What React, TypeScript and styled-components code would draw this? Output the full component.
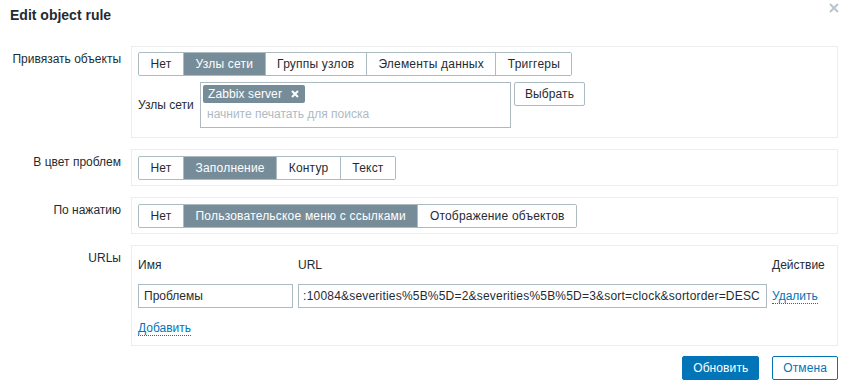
import React from 'react';
import styled, { createGlobalStyle } from 'styled-components';

const GlobalStyle = createGlobalStyle`
	* {
		box-sizing: border-box;
	}
	body {
		margin: 0;
		background: #ffffff;
		color: #1f2c33;
		font-family: 'Liberation Sans', Arial, sans-serif;
		font-size: 12px;
		line-height: 14px;
	}
`;

const Dialog = styled.div`
	width: 845px;
	padding: 0 7px 0 10px;
`;

const Header = styled.div`
	height: 46px;
	display: flex;
	justify-content: space-between;
	align-items: flex-start;
	padding-top: 7px;
`;

const Title = styled.h4`
	margin: 0;
	font-size: 14px;
	line-height: 16px;
	font-weight: bold;
	color: #1f2c33;
`;

const CloseButton = styled.button`
	margin-top: -4px;
	margin-right: -1px;
	width: 10px;
	height: 10px;
	padding: 0;
	border: 0;
	background: none;
	display: flex;
	cursor: pointer;
`;

const Form = styled.div`
	display: grid;
	grid-template-columns: 111px 1fr;
	column-gap: 10px;
	row-gap: 11px;
`;

const Label = styled.div`
	text-align: right;
	padding-top: 6px;
	white-space: nowrap;
`;

const Fieldset = styled.div<{ $pad?: string }>`
	border: 1px solid #ebeef0;
	padding: ${(p) => p.$pad || '6px 6px 5px'};
`;

const RadioList = styled.div`
	display: inline-flex;
	height: 24px;
	border: 1px solid #acbbc2;
	border-radius: 2px;
	overflow: hidden;
`;

const RadioItem = styled.div<{ $active?: boolean }>`
	padding: 0 11.5px;
	line-height: 22px;
	letter-spacing: 0.2px;
	white-space: nowrap;
	cursor: pointer;
	background: ${(p) => (p.$active ? '#768d99' : '#ffffff')};
	color: ${(p) => (p.$active ? '#ffffff' : '#1f2c33')};
	& + & {
		border-left: 1px solid #acbbc2;
	}
`;

const HostRow = styled.div`
	display: flex;
	align-items: center;
	margin-top: 6px;
`;

const SubLabel = styled.div`
	width: 62px;
	white-space: nowrap;
`;

const MultiSelect = styled.div`
	width: 311px;
	height: 46px;
	border: 1px solid #acbbc2;
	padding: 2px;
`;

const Chip = styled.span`
	display: inline-flex;
	align-items: center;
	gap: 9px;
	height: 18px;
	padding: 0 6px 0 5px;
	border-radius: 2px;
	background: #768d99;
	color: #ffffff;
	font-size: 12px;
	letter-spacing: 0.1px;
`;

const Placeholder = styled.div`
	margin-top: 4px;
	padding-left: 4px;
	color: #acbbc2;
	white-space: nowrap;
`;

const Button = styled.button<{ $primary?: boolean }>`
	height: 24px;
	padding: 0 10px;
	font-family: inherit;
	font-size: 12px;
	letter-spacing: 0.1px;
	border-radius: 2px;
	cursor: pointer;
	border: 1px solid ${(p) => (p.$primary ? '#0275b8' : '#acbbc2')};
	background: ${(p) => (p.$primary ? '#0275b8' : '#ffffff')};
	color: ${(p) => (p.$primary ? '#ffffff' : '#1f2c33')};
`;

const OutlineButton = styled(Button)`
	border-color: #0275b8;
	color: #0275b8;
`;

const SelectButton = styled(Button)`
	align-self: flex-start;
	margin-left: 3px;
`;

const UrlTable = styled.div`
	display: grid;
	grid-template-columns: 155px 469px auto;
	column-gap: 5px;
	align-items: center;
`;

const HeadCell = styled.div`
	padding-top: 6px;
	margin-bottom: 12px;
	white-space: nowrap;
`;

const TextBox = styled.div`
	height: 24px;
	border: 1px solid #acbbc2;
	padding: 0 5px;
	line-height: 22px;
	white-space: nowrap;
	overflow: hidden;
	display: flex;
`;

const ScrolledBox = styled(TextBox)`
	justify-content: flex-end;
	padding: 0 6px 0 2px;
	letter-spacing: 0.2px;
`;

const Link = styled.a`
	color: #0275b8;
	text-decoration: none;
	border-bottom: 1px dotted #0275b8;
	cursor: pointer;
`;

const AddRow = styled.div`
	margin-top: 13px;
	padding-bottom: 5px;
`;

const Footer = styled.div`
	display: flex;
	justify-content: flex-end;
	gap: 13px;
	margin-top: 10px;
`;

const binds = ['Нет', 'Узлы сети', 'Группы узлов', 'Элементы данных', 'Триггеры'];
const colors = ['Нет', 'Заполнение', 'Контур', 'Текст'];
const clicks = ['Нет', 'Пользовательское меню с ссылками', 'Отображение объектов'];

const Radio: React.FC<{ items: string[]; active: number }> = ({ items, active }) => (
	<RadioList>
		{items.map((item, i) => (
			<RadioItem key={item} $active={i === active}>
				{item}
			</RadioItem>
		))}
	</RadioList>
);

const App: React.FC = () => {
	return (
		<Dialog>
			<GlobalStyle />
			<Header>
				<Title>Edit object rule</Title>
				<CloseButton aria-label="Close">
					<svg width="10" height="10" viewBox="0 0 10 10">
						<path d="M1 1L9 9M9 1L1 9" stroke="#b8c5cc" strokeWidth="2" />
					</svg>
				</CloseButton>
			</Header>
			<Form>
				<Label>Привязать объекты</Label>
				<Fieldset $pad="5px 6px 9px">
					<Radio items={binds} active={1} />
					<HostRow>
						<SubLabel>Узлы сети</SubLabel>
						<MultiSelect>
							<Chip>
								Zabbix server
								<svg width="8" height="8" viewBox="0 0 8 8">
									<path d="M1 1L7 7M7 1L1 7" stroke="#ffffff" strokeWidth="2" />
								</svg>
							</Chip>
							<Placeholder>начните печатать для поиска</Placeholder>
						</MultiSelect>
						<SelectButton>Выбрать</SelectButton>
					</HostRow>
				</Fieldset>

				<Label>В цвет проблем</Label>
				<Fieldset>
					<Radio items={colors} active={1} />
				</Fieldset>

				<Label>По нажатию</Label>
				<Fieldset>
					<Radio items={clicks} active={1} />
				</Fieldset>

				<Label>URLы</Label>
				<Fieldset $pad="6px 6px 5px">
					<UrlTable>
						<HeadCell>Имя</HeadCell>
						<HeadCell>URL</HeadCell>
						<HeadCell>Действие</HeadCell>
						<TextBox>Проблемы</TextBox>
						<ScrolledBox>
							:10084&amp;severities%5B%5D=2&amp;severities%5B%5D=3&amp;sort=clock&amp;sortorder=DESC
						</ScrolledBox>
						<div>
							<Link>Удалить</Link>
						</div>
					</UrlTable>
					<AddRow>
						<Link>Добавить</Link>
					</AddRow>
				</Fieldset>
			</Form>
			<Footer>
				<Button $primary>Обновить</Button>
				<OutlineButton>Отмена</OutlineButton>
			</Footer>
		</Dialog>
	);
};

export default App;
